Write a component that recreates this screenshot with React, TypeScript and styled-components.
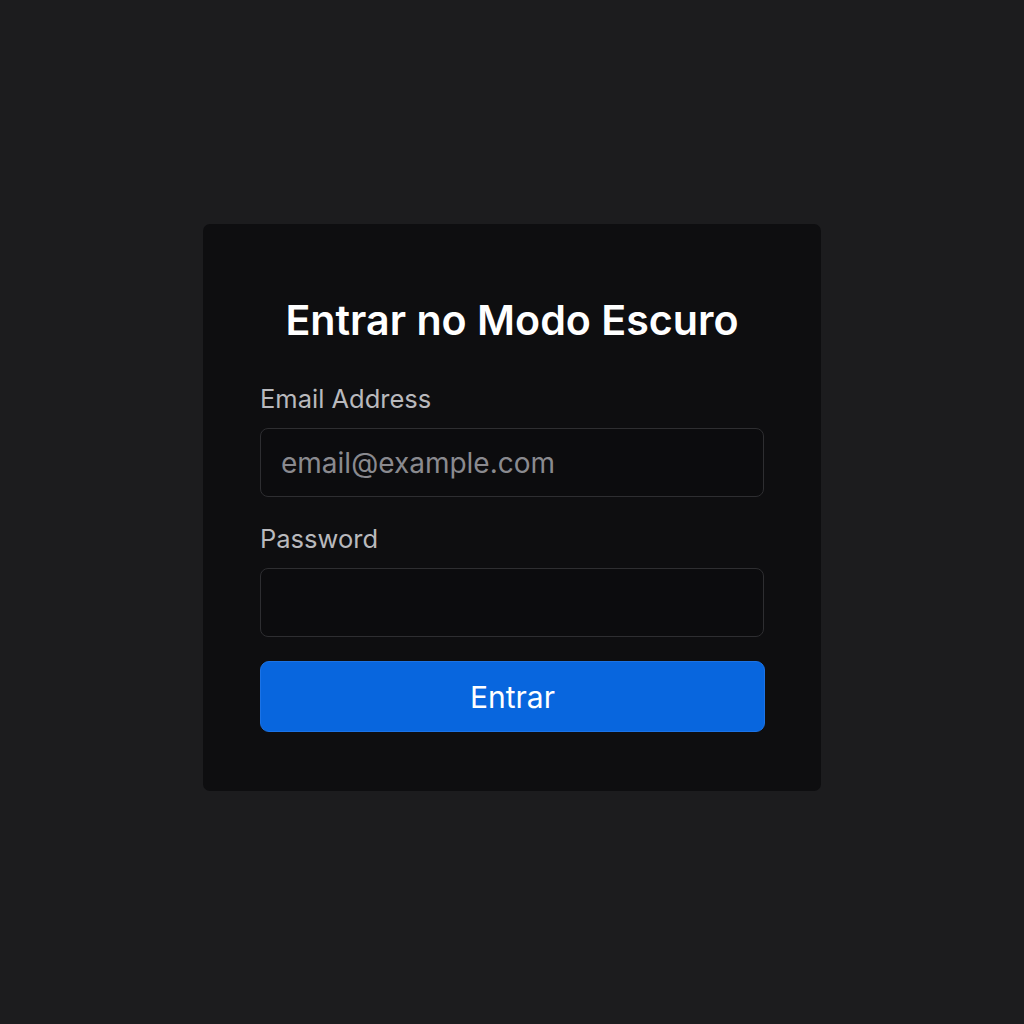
import React from "react";
import styled, { createGlobalStyle } from "styled-components";

const Global = createGlobalStyle`
  html, body { margin: 0; padding: 0; background: #1c1c1e; }
  body { font-family: Inter, "Noto Sans", sans-serif; }
  * { box-sizing: border-box; }
`;

const Page = styled.div`
  width: 1024px;
  height: 1024px;
  background: #1c1c1e;
  display: flex;
  justify-content: center;
  padding-top: 224px;
`;

const Card = styled.form`
  width: 618px;
  height: 567px;
  background: #0e0e10;
  border-radius: 7px;
  padding: 72px 57px 0;
  display: flex;
  flex-direction: column;
`;

const Title = styled.h1`
  margin: 0 0 40px;
  font-size: 41.2px;
  line-height: 48px;
  font-weight: 600;
  color: #ffffff;
  text-align: center;
`;

const Label = styled.label`
  font-size: 25.5px;
  line-height: 30px;
  color: #b9b9bd;
  margin-bottom: 14px;
`;

const Input = styled.input<{ $mb: number }>`
  width: 504px;
  height: 69px;
  background: #0c0c0e;
  border: 1.5px solid #2e2e31;
  border-radius: 8px;
  padding: 0 20px;
  font-family: Inter, "Noto Sans", sans-serif;
  font-size: 28px;
  color: #e0e0e0;
  outline: none;
  margin-bottom: ${(p) => p.$mb}px;
  &::placeholder { color: #8a8a8f; }
`;

const Button = styled.button`
  width: 505px;
  height: 71px;
  background: #0866de;
  border: 1px solid #1b73e6;
  border-radius: 9px;
  color: #ffffff;
  font-family: Inter, "Noto Sans", sans-serif;
  font-size: 30px;
  font-weight: 400;
  cursor: pointer;
`;

export default function App() {
  return (
    <>
      <Global />
      <Page>
        <Card onSubmit={(e) => e.preventDefault()}>
          <Title>Entrar no Modo Escuro</Title>
          <Label htmlFor="email">Email Address</Label>
          <Input id="email" type="email" placeholder="email@example.com" $mb={27} />
          <Label htmlFor="pw">Password</Label>
          <Input id="pw" type="password" $mb={24} />
          <Button type="submit">Entrar</Button>
        </Card>
      </Page>
    </>
  );
}
